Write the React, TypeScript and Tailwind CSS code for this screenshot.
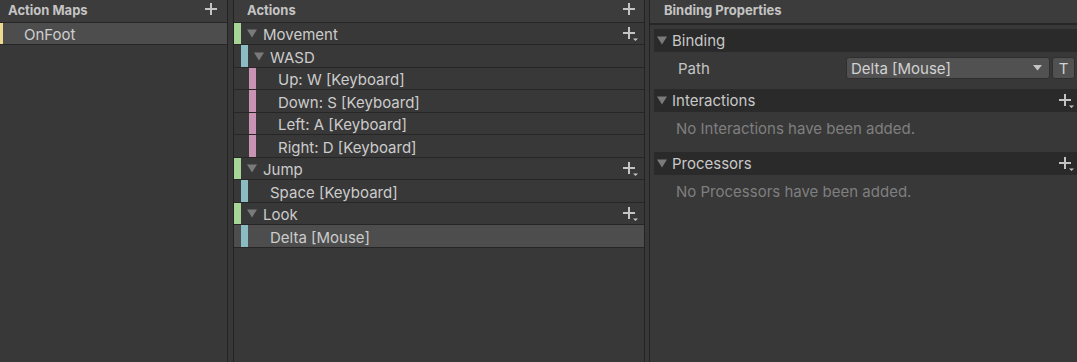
import React from "react";

const Plus = ({ drop }: { drop?: boolean }) => (
  <svg width={drop ? 16 : 12} height={14} viewBox={`0 0 ${drop ? 16 : 12} 14`} className="shrink-0">
    <rect x="5" y="0" width="2" height="12" fill="#c4c4c4" />
    <rect x="0" y="5" width="12" height="2" fill="#c4c4c4" />
    {drop && <polygon points="10,11.5 15,11.5 12.5,14" fill="#c4c4c4" />}
  </svg>
);

const Tri = ({ hidden }: { hidden?: boolean }) => (
  <svg width={10} height={9} viewBox="0 0 10 9" className={hidden ? "invisible shrink-0" : "shrink-0"}>
    <polygon points="0,0.5 10,0.5 5,8.5" fill="#7a7a7a" />
  </svg>
);

type Row = {
  label: string;
  ml: string;
  bar: string;
  parent?: boolean;
  plus?: boolean;
  selected?: boolean;
  h: string;
};

const GREEN = "bg-[#a6d596]";
const BLUE = "bg-[#8cbcc3]";
const PINK = "bg-[#c993b3]";

const rows: Row[] = [
  { label: "Movement", ml: "ml-0", bar: GREEN, parent: true, plus: true, h: "h-[22px]" },
  { label: "WASD", ml: "ml-[7px]", bar: BLUE, parent: true, h: "h-[23px]" },
  { label: "Up: W [Keyboard]", ml: "ml-[15px]", bar: PINK, h: "h-[22px]" },
  { label: "Down: S [Keyboard]", ml: "ml-[15px]", bar: PINK, h: "h-[23px]" },
  { label: "Left: A [Keyboard]", ml: "ml-[15px]", bar: PINK, h: "h-[22px]" },
  { label: "Right: D [Keyboard]", ml: "ml-[15px]", bar: PINK, h: "h-[23px]" },
  { label: "Jump", ml: "ml-0", bar: GREEN, parent: true, plus: true, h: "h-[22px]" },
  { label: "Space [Keyboard]", ml: "ml-[7px]", bar: BLUE, h: "h-[23px]" },
  { label: "Look", ml: "ml-0", bar: GREEN, parent: true, plus: true, h: "h-[22px]" },
  { label: "Delta [Mouse]", ml: "ml-[7px]", bar: BLUE, selected: true, h: "h-[23px]" },
];

const Foldout = ({ label, plus }: { label: string; plus?: boolean }) => (
  <div className="flex items-center h-[23px] bg-[#2a2a2a] pl-[3px] pr-[2px]">
    <Tri />
    <span className="ml-[5px] text-[15px] text-[#c8c8c8] leading-none">{label}</span>
    <div className="flex-1" />
    {plus && <Plus drop />}
  </div>
);

export default function App() {
  return (
    <div className="w-[1077px] h-[362px] bg-[#383838] flex font-['Inter',sans-serif] overflow-hidden select-none">
      {/* Action Maps */}
      <div className="w-[228px] shrink-0 border-r border-[#232323] flex flex-col">
        <div className="h-[23px] bg-[#3c3c3c] border-b border-[#262626] flex items-center justify-between pl-[8px] pr-[10px] pb-[2px]">
          <span className="text-[13px] font-bold text-[#c4c4c4] leading-none">Action Maps</span>
          <Plus />
        </div>
        <div className="h-[22px] bg-[#4d4d4d] border-b border-[#262626] flex items-center">
          <div className="w-[3px] h-full bg-[#ecdb8e]" />
          <span className="ml-[21px] pt-[2px] text-[15px] text-[#cfcfcf] leading-none">OnFoot</span>
        </div>
      </div>

      <div className="w-[5px] shrink-0" />

      {/* Actions */}
      <div className="w-[412px] shrink-0 border-l border-r border-[#232323] flex flex-col">
        <div className="h-[23px] bg-[#3c3c3c] border-b border-[#262626] flex items-center justify-between pl-[13px] pr-[9px] pb-[2px]">
          <span className="text-[13px] font-bold text-[#c4c4c4] leading-none">Actions</span>
          <Plus />
        </div>
        {rows.map((r) => (
          <div
            key={r.label}
            className={`${r.h} border-b border-[#262626] flex items-center ${r.selected ? "bg-[#4d4d4d]" : ""}`}
          >
            <div className={`${r.ml} w-[7px] h-full shrink-0 ${r.bar}`} />
            <div className="w-[6px] shrink-0" />
            <Tri hidden={!r.parent} />
            <span className="ml-[6px] pt-[2px] text-[15px] text-[#cccccc] leading-none whitespace-nowrap">{r.label}</span>
            <div className="flex-1" />
            {r.plus && (
              <div className="mr-[5px] pt-[1px]">
                <Plus drop />
              </div>
            )}
          </div>
        ))}
      </div>

      <div className="w-[4px] shrink-0" />

      {/* Binding Properties */}
      <div className="flex-1 border-l border-[#232323] flex flex-col">
        <div className="h-[25px] bg-[#3c3c3c] border-b-2 border-[#262626] flex items-center pl-[14px] pb-[3px]">
          <span className="text-[13px] font-bold text-[#c4c4c4] leading-none">Binding Properties</span>
        </div>
        <div className="pl-[4px] pt-[4px] flex flex-col">
          <Foldout label="Binding" />
          <div className="pt-[5px] pb-[10px] flex items-center">
            <span className="ml-[24px] w-[168px] text-[15px] text-[#c4c4c4] leading-none">Path</span>
            <div className="w-[204px] h-[22px] rounded-[3px] bg-[#515151] border border-[#2f2f2f] flex items-center pl-[4px] pr-[7px]">
              <span className="text-[15px] text-[#d2d2d2] leading-none flex-1">Delta [Mouse]</span>
              <svg width="9" height="6" viewBox="0 0 9 6">
                <polygon points="0,0 9,0 4.5,5.5" fill="#c4c4c4" />
              </svg>
            </div>
            <div className="ml-[2px] w-[23px] h-[22px] rounded-[3px] bg-[#515151] border border-[#2f2f2f] flex items-center justify-center">
              <span className="text-[15px] text-[#d2d2d2] leading-none">T</span>
            </div>
          </div>
          <Foldout label="Interactions" plus />
          <div className="h-[40px] pl-[22px] pt-[4px]">
            <span className="text-[15px] text-[#7f7f7f] leading-[20px]">No Interactions have been added.</span>
          </div>
          <Foldout label="Processors" plus />
          <div className="h-[40px] pl-[22px] pt-[4px]">
            <span className="text-[15px] text-[#7f7f7f] leading-[20px]">No Processors have been added.</span>
          </div>
        </div>
      </div>
    </div>
  );
}
